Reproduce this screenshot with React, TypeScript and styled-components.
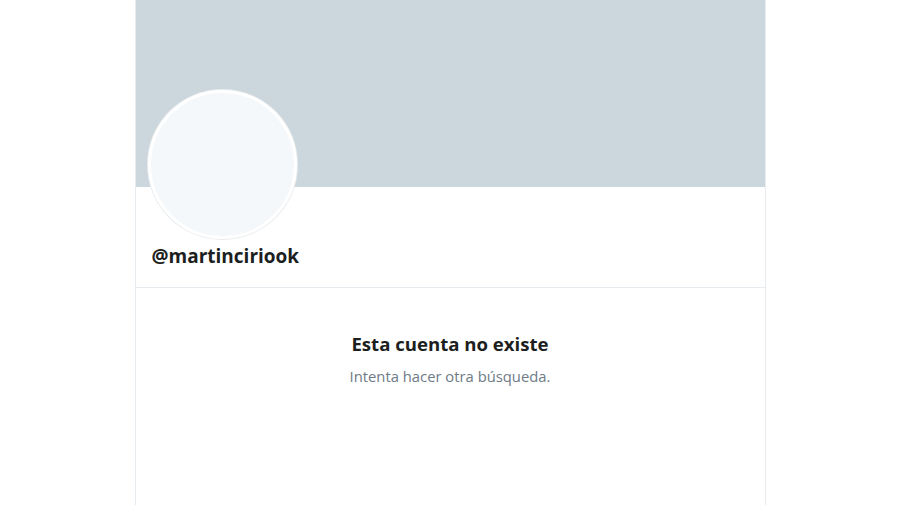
import styled, { createGlobalStyle } from "styled-components";

const GlobalStyle = createGlobalStyle`
    html, body {
        margin: 0;
        padding: 0;
        background: #ffffff;
    }
    body {
        font-family: "Open Sans", "Noto Sans", "Liberation Sans", sans-serif;
        color: #14171a;
    }
`;

const App = () => {
    return (
        <>
            <GlobalStyle />
            <Column>
                <Banner />
                <ProfileHeader>
                    <Avatar />
                    <Handle>@martinciriook</Handle>
                </ProfileHeader>
                <EmptyState>
                    <EmptyTitle>Esta cuenta no existe</EmptyTitle>
                    <EmptyText>Intenta hacer otra búsqueda.</EmptyText>
                </EmptyState>
            </Column>
        </>
    );
};

export default App;

const Column = styled.main`
    width: 629px;
    min-height: 505px;
    margin: 0 auto;
    border-left: 1px solid #e6ecf0;
    border-right: 1px solid #e6ecf0;
    display: flex;
    flex-direction: column;
`;

const Banner = styled.div`
    height: 187px;
    background-color: #ccd6dd;
`;

const ProfileHeader = styled.section`
    display: flex;
    flex-direction: column;
    align-items: flex-start;
    padding: 0 16px 18px 16px;
    border-bottom: 1px solid #e6ecf0;
`;

const Avatar = styled.div`
    width: 143px;
    height: 143px;
    margin: -97px 0 0 -4px;
    border-radius: 50%;
    background-color: #f5f8fa;
    border: 3px solid #ffffff;
    box-shadow: 0 0 0 1px #e8ecee;
`;

const Handle = styled.h2`
    margin: 4px 0 0 0;
    font-size: 19px;
    line-height: 26px;
    font-weight: 700;
    color: #1c1e20;
`;

const EmptyState = styled.section`
    display: flex;
    flex-direction: column;
    align-items: center;
    padding-top: 43px;
`;

const EmptyTitle = styled.h3`
    margin: 0;
    font-size: 18.6px;
    line-height: 26px;
    font-weight: 700;
    color: #1c1e20;
`;

const EmptyText = styled.p`
    margin: 9px 0 0 0;
    font-size: 14.8px;
    line-height: 20px;
    color: #6e7b86;
`;
